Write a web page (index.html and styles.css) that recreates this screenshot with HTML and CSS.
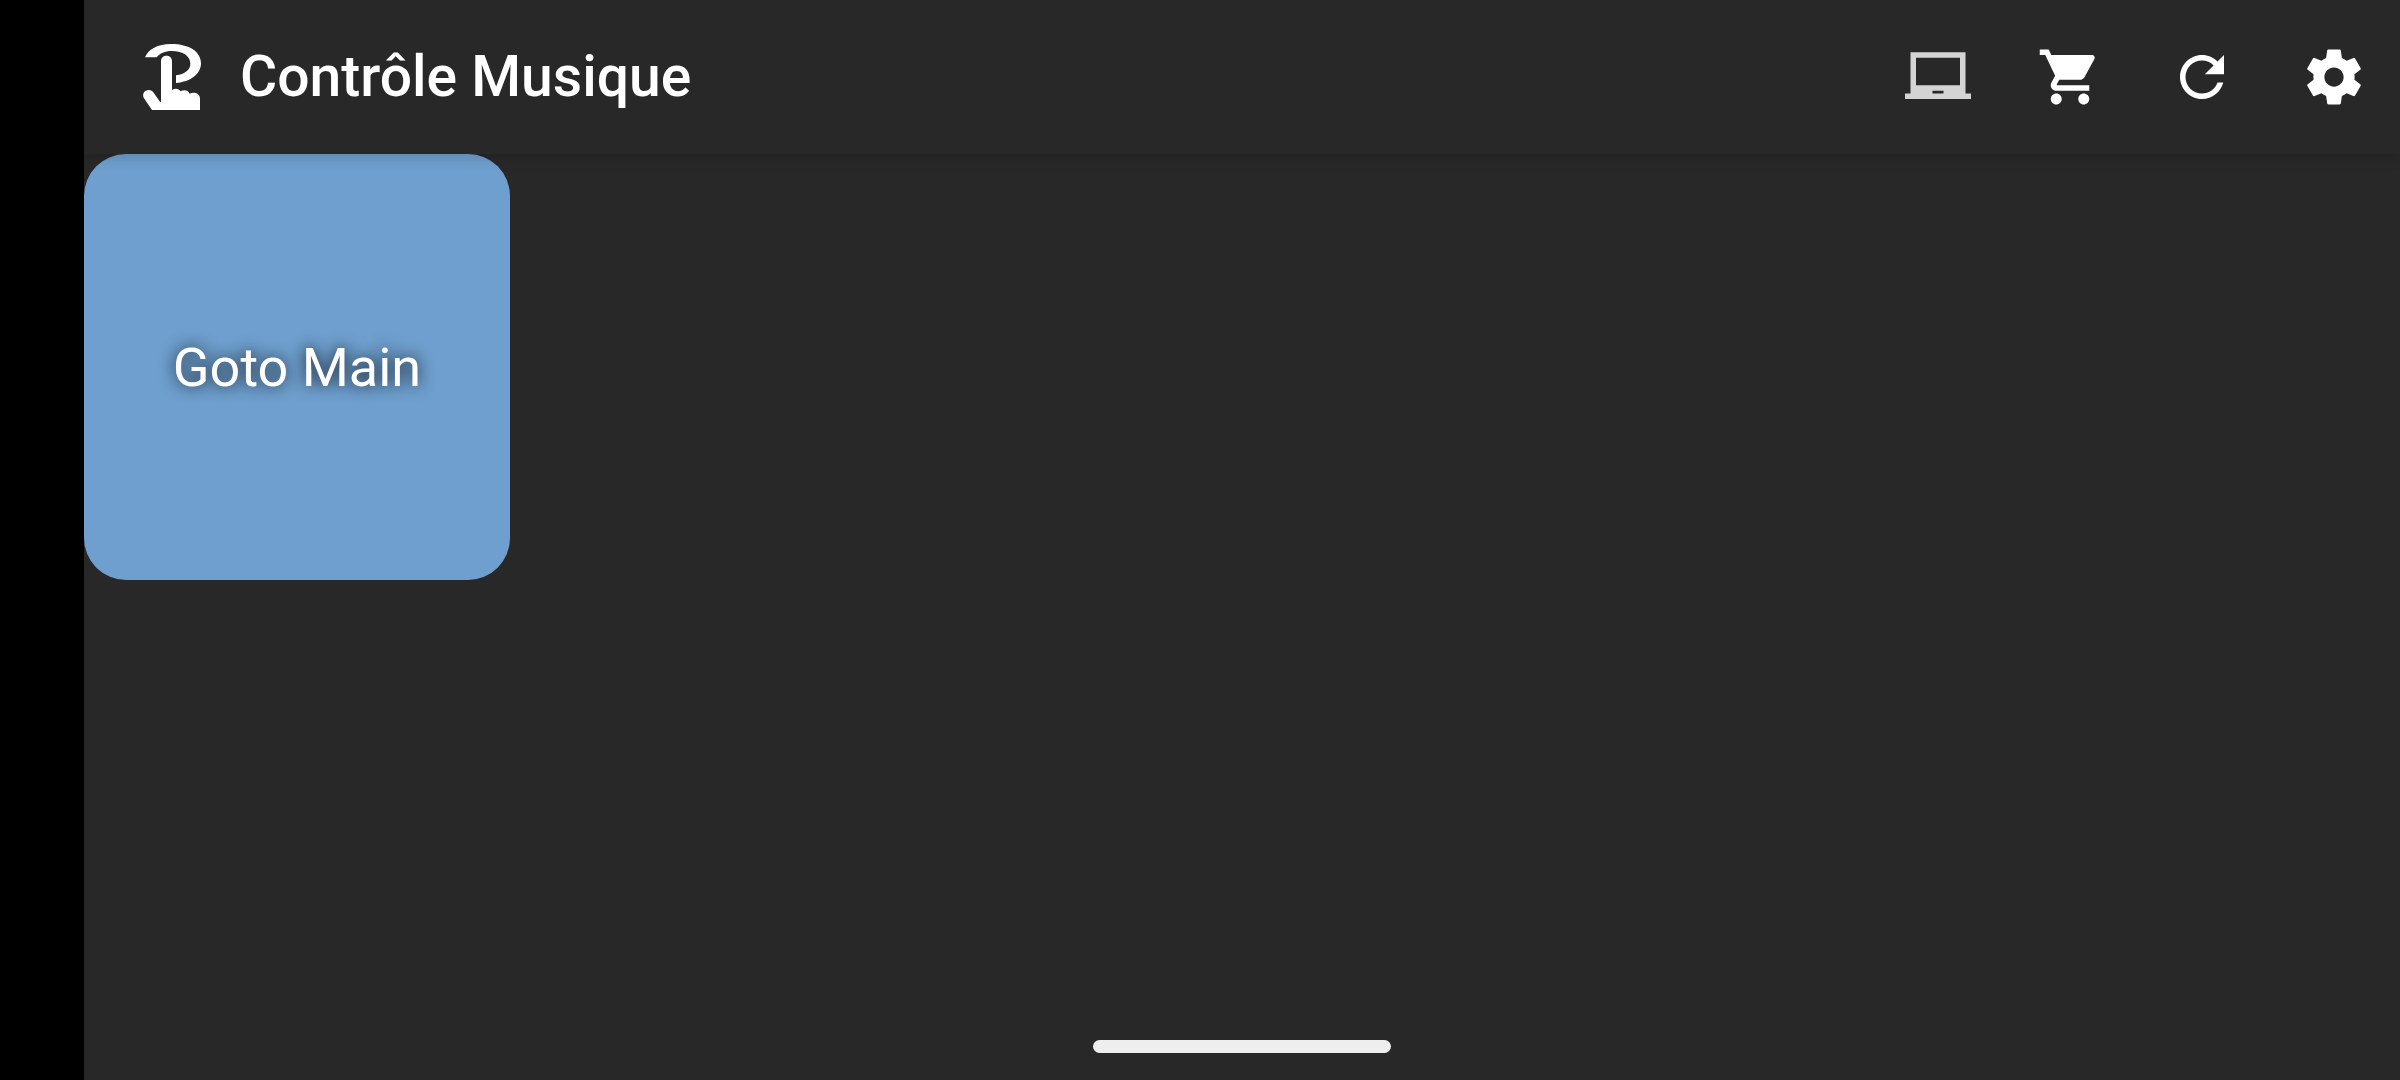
FILE: index.html
```
<!DOCTYPE html>
<html lang="fr">
<head>
    <meta charset="UTF-8">
    <meta name="viewport" content="width=device-width, initial-scale=1.0">
    <title>Contrôle Musique</title>
    <link rel="stylesheet" href="styles.css">
</head>
<body>
    <div class="app">
        <header class="toolbar">
            <svg class="logo" viewBox="66 36 180 210" aria-hidden="true">
                <path d="M75 82C85 58 113 42 153 42C208 42 243 65 243 100C243 131 213 156 168 159V136C195 132 211 119 211 101C211 79 190 63 155 63C135 63 119 70 110 82Z"/>
                <path d="M96 240L71 203C66 191 74 180 86 180C93 180 97 183 101 188L120 215L123 217V94C123 72 156 72 156 94V180C165 174 177 176 182 184C192 178 205 181 209 191C222 185 240 190 240 206V240Z"/>
            </svg>
            <h1 class="title">Contrôle Musique</h1>
            <nav class="actions">
                <button class="action dimmed" aria-label="Ordinateur">
                    <svg viewBox="0 0 24 24"><path d="M22 18V3H2v15H0v2h24v-2h-2zm-8 0h-4v-1h4v1zm6-3H4V5h16v10z"/></svg>
                </button>
                <button class="action" aria-label="Boutique">
                    <svg viewBox="0 0 24 24"><path d="M7 18c-1.1 0-1.99.9-1.99 2S5.9 22 7 22s2-.9 2-2-.9-2-2-2zM1 2v2h2l3.6 7.59-1.35 2.45c-.16.28-.25.61-.25.96 0 1.1.9 2 2 2h12v-2H7.42c-.14 0-.25-.11-.25-.25l.03-.12.9-1.63h7.45c.75 0 1.41-.41 1.75-1.03l3.58-6.49c.08-.14.12-.31.12-.48 0-.55-.45-1-1-1H5.21l-.94-2H1zm16 16c-1.1 0-1.99.9-1.99 2s.89 2 1.99 2 2-.9 2-2-.9-2-2-2z"/></svg>
                </button>
                <button class="action" aria-label="Actualiser">
                    <svg viewBox="0 0 24 24"><path d="M17.65 6.35C16.2 4.9 14.21 4 12 4c-4.42 0-7.99 3.58-7.99 8s3.57 8 7.99 8c3.73 0 6.84-2.55 7.73-6h-2.08c-.82 2.33-3.04 4-5.65 4-3.31 0-6-2.69-6-6s2.69-6 6-6c1.66 0 3.14.69 4.22 1.78L13 11h7V4l-2.35 2.35z"/></svg>
                </button>
                <button class="action" aria-label="Paramètres">
                    <svg viewBox="0 0 24 24"><path d="M19.43 12.98c.04-.32.07-.64.07-.98s-.03-.66-.07-.98l2.11-1.65c.19-.15.24-.42.12-.64l-2-3.46c-.12-.22-.39-.3-.61-.22l-2.49 1c-.52-.4-1.08-.73-1.69-.98l-.38-2.65C14.46 2.18 14.25 2 14 2h-4c-.25 0-.46.18-.49.42l-.38 2.65c-.61.25-1.17.59-1.69.98l-2.49-1c-.23-.09-.49 0-.61.22l-2 3.46c-.13.22-.07.49.12.64l2.11 1.65c-.04.32-.07.65-.07.98s.03.66.07.98l-2.11 1.65c-.19.15-.24.42-.12.64l2 3.46c.12.22.39.3.61.22l2.49-1c.52.4 1.08.73 1.69.98l.38 2.65c.03.24.24.42.49.42h4c.25 0 .46-.18.49-.42l.38-2.65c.61-.25 1.17-.59 1.69-.98l2.49 1c.23.09.49 0 .61-.22l2-3.46c.12-.22.07-.49-.12-.64l-2.11-1.65zM12 15.5c-1.93 0-3.5-1.57-3.5-3.5s1.57-3.5 3.5-3.5 3.5 1.57 3.5 3.5-1.57 3.5-3.5 3.5z"/></svg>
                </button>
            </nav>
        </header>
        <main class="board">
            <button class="tile">Goto Main</button>
        </main>
        <footer class="navbar">
            <div class="handle"></div>
        </footer>
    </div>
</body>
</html>
```
FILE: styles.css
```
* {
    box-sizing: border-box;
}

/* the black strip on the left is the camera cutout area */
body {
    margin: 0;
    padding-left: 84px;
    min-height: 100vh;
    background-color: #000;
    color: #fff;
    font-family: Roboto, sans-serif;
}

.app {
    display: flex;
    flex-direction: column;
    min-height: 100vh;
    background-color: #282828;
}

.toolbar {
    display: flex;
    align-items: center;
    height: 154px;
    padding: 0 33px 0 58px;
    background-color: #282828;
    box-shadow: 0 4px 12px rgba(0, 0, 0, 0.15);
    z-index: 1;
}

.logo {
    width: 60px;
    height: 70px;
    fill: #fff;
}

.title {
    margin: 0 0 0 38px;
    font-size: 57px;
    font-weight: 500;
    line-height: 64px;
}

.actions {
    display: flex;
    gap: 66px;
    margin-left: auto;
}

.action {
    padding: 0;
    border: none;
    background: none;
    cursor: pointer;
}

.action svg {
    display: block;
    width: 66px;
    height: 66px;
    fill: #fff;
}

.dimmed svg {
    fill: #d4d4d4;
}

.board {
    display: grid;
    grid-template-columns: repeat(auto-fill, 426px);
    align-content: start;
    flex: 1;
}

.tile {
    aspect-ratio: 1;
    border: none;
    border-radius: 42px;
    background-color: #6e9fce;
    color: #fff;
    font-family: inherit;
    font-size: 54px;
    text-shadow: 0 0 16px rgba(0, 0, 0, 0.9);
    cursor: pointer;
}

.navbar {
    display: flex;
    justify-content: center;
    padding-bottom: 27px;
}

.handle {
    width: 298px;
    height: 13px;
    border-radius: 7px;
    background-color: #eee;
}
```
